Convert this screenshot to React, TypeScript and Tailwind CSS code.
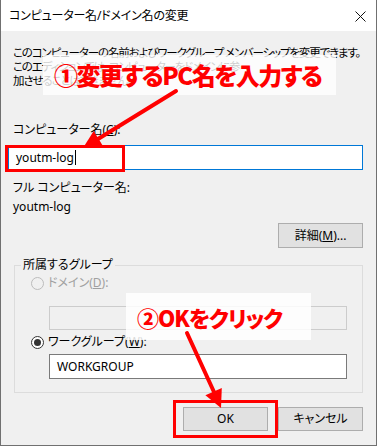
import React from "react";

const jp = "font-['Noto_Sans','Noto_Sans_CJK_JP',sans-serif] [font-feature-settings:'palt']";

function Radio({ checked, disabled }: { checked?: boolean; disabled?: boolean }) {
  return (
    <span
      className={`flex h-[13px] w-[13px] items-center justify-center rounded-full border ${
        disabled ? "border-[#bcbcbc] bg-[#f0f0f0]" : "border-[#333333] bg-white"
      }`}
    >
      {checked && <span className="h-[7px] w-[7px] rounded-full bg-[#333333]" />}
    </span>
  );
}

export default function App() {
  return (
    <div className={`relative flex h-[446px] w-[377px] flex-col overflow-hidden border-x border-b border-[#707070] bg-[#f0f0f0] text-[12px] leading-[14px] text-black ${jp}`}>
      {/* Title bar */}
      <div className="flex h-[31px] shrink-0 items-center justify-between bg-white pl-[8px] pr-[10px]">
        <span className="text-[12px] tracking-[-0.2px]">コンピューター名/ドメイン名の変更</span>
        <svg width="11" height="11" viewBox="0 0 11 11" className="mt-[1px]">
          <path d="M0.5 0.5 L10.5 10.5 M10.5 0.5 L0.5 10.5" stroke="#111" strokeWidth="1" />
        </svg>
      </div>

      {/* Body */}
      <div className="flex flex-1 flex-col pl-[7px] pr-[13px] pt-[15px]">
        <div className="whitespace-nowrap pl-[5px] text-[11.5px] tracking-[-1.15px]">
          <div>このコンピューターの名前およびワークグループ メンバーシップを変更できます。</div>
          <div>このエディションでは、コンピューターをドメインに参</div>
          <div>加させることはできません。</div>
        </div>

        <div className="mt-[35px] pl-[5px]">
          コンピューター名(<span className="underline">C</span>):
        </div>
        <div className="mt-[8px] flex h-[25px] items-center border border-[#0078d7] bg-white pl-[7px]">
          <span>youtm-log</span>
          <span className="ml-[1px] h-[15px] w-[1px] bg-black" />
        </div>

        <div className="mt-[11px] pl-[5px]">フル コンピューター名:</div>
        <div className="mt-[5px] pl-[5px]">youtm-log</div>

        <div className="mt-[9px] flex justify-end">
          <button className="flex h-[25px] w-[85px] items-center justify-center border border-[#adadad] bg-[#e1e1e1]">
            詳細(<span className="underline">M</span>)...
          </button>
        </div>

        <fieldset className="ml-[6px] mt-[10px] border border-[#dcdcdc] pb-[13px] pr-[15px]">
          <legend className="ml-[6px] px-[2px]">所属するグループ</legend>
          <div className="pl-[16px]">
            <div className="mt-[4px] flex items-center gap-[4px] text-[#a0a0a0]">
              <Radio disabled />
              <span>
                ドメイン(<span className="underline">D</span>):
              </span>
            </div>
            <div className="ml-[18px] mt-[16px] h-[24px] border border-[#cccccc] bg-[#f0f0f0]" />
            <div className="mt-[5px] flex items-center gap-[4px]">
              <Radio checked />
              <span>
                ワークグループ(<span className="underline">W</span>):
              </span>
            </div>
            <div className="ml-[18px] mt-[5px] flex h-[25px] items-center border border-[#7a7a7a] bg-white pl-[7px]">
              WORKGROUP
            </div>
          </div>
        </fieldset>

        <div className="mt-[14px] flex justify-end gap-[10px]">
          <button className="flex h-[24px] w-[85px] items-center justify-center border border-[#adadad] bg-[#e1e1e1]">
            OK
          </button>
          <button className="flex h-[24px] w-[85px] items-center justify-center border border-[#adadad] bg-[#e1e1e1]">
            キャンセル
          </button>
        </div>
      </div>

      {/* Annotations */}
      <div className="pointer-events-none absolute left-[42px] top-[55px] flex h-[40px] w-[293px] items-center bg-white/80 pl-[11px]">
        <span className="font-['Noto_Sans_CJK_JP',sans-serif] text-[24px] font-black leading-none tracking-[-1.5px] text-[#ff0000]">
          ①変更するPC名を入力する
        </span>
      </div>
      <div className="pointer-events-none absolute left-[125px] top-[293px] flex h-[47px] w-[185px] items-center bg-white/85 pl-[11px]">
        <span className="font-['Noto_Sans_CJK_JP',sans-serif] text-[22px] font-black leading-none tracking-[-1px] text-[#ff0000]">
          ②OKをクリック
        </span>
      </div>
      <div className="pointer-events-none absolute left-[4px] top-[145px] h-[27px] w-[120px] border-[3px] border-[#ff0000]" />
      <div className="pointer-events-none absolute left-[172px] top-[400px] h-[38px] w-[105px] border-[3px] border-[#ff0000]" />
      <svg className="pointer-events-none absolute left-0 top-0" width="377" height="446" viewBox="0 0 377 446">
        <line x1="175" y1="91" x2="97" y2="139" stroke="#ff0000" strokeWidth="4" strokeLinecap="round" />
        <polygon points="82,148 102.1,146.3 92.7,130.9" fill="#ff0000" />
        <line x1="186" y1="333" x2="213" y2="392" stroke="#ff0000" strokeWidth="4" strokeLinecap="round" />
        <polygon points="220,408 220.8,387.9 204.4,395.3" fill="#ff0000" />
      </svg>
    </div>
  );
}
